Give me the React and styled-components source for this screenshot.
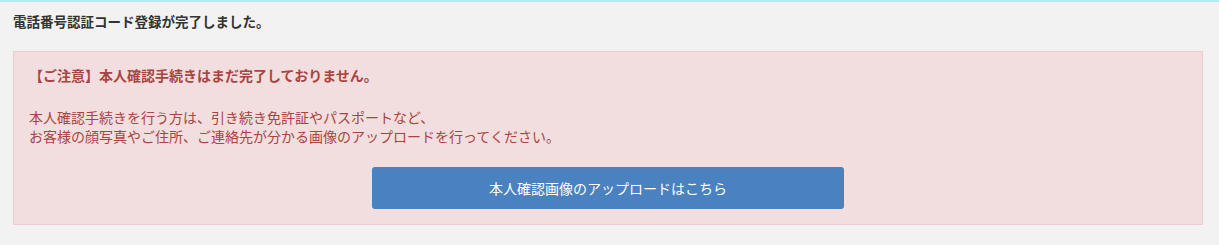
import React from "react";
import styled, { createGlobalStyle } from "styled-components";

const Global = createGlobalStyle`
  html, body { margin: 0; padding: 0; background: #f2f2f2; }
  body {
    font-family: "Noto Sans CJK JP", "Noto Sans", sans-serif;
    color: #333;
  }
`;

const Page = styled.div`
  border-top: 2px solid #b3ebf3;
  padding: 9px 13px 20px 13px;
  min-height: 245px;
  box-sizing: border-box;
`;

const Title = styled.h1`
  margin: 0 0 20px 0;
  font-size: 13.5px;
  line-height: 20px;
  font-weight: 700;
  color: #333;
`;

const Alert = styled.div`
  background: #f2dede;
  border: 1px solid #ebccd1;
  color: #a94442;
  padding: 13px 15px 15px 15px;
  width: 1190px;
  box-sizing: border-box;
`;

const Heading = styled.p`
  margin: 0 0 23px 0;
  font-size: 14px;
  line-height: 20px;
  font-weight: 700;
`;

const Body = styled.p`
  margin: 0 0 21px 0;
  font-size: 14px;
  line-height: 19px;
`;

const Actions = styled.div`
  display: flex;
  justify-content: center;
`;

const Button = styled.a`
  display: flex;
  align-items: center;
  justify-content: center;
  width: 472px;
  height: 42px;
  background: #4a81bf;
  color: #fff;
  border-radius: 3px;
  font-size: 14px;
  text-decoration: none;
  cursor: pointer;
`;

export default function App() {
  return (
    <>
      <Global />
      <Page>
        <Title>電話番号認証コード登録が完了しました。</Title>
        <Alert>
          <Heading>【ご注意】本人確認手続きはまだ完了しておりません。</Heading>
          <Body>
            本人確認手続きを行う方は、引き続き免許証やパスポートなど、
            <br />
            お客様の顔写真やご住所、ご連絡先が分かる画像のアップロードを行ってください。
          </Body>
          <Actions>
            <Button>本人確認画像のアップロードはこちら</Button>
          </Actions>
        </Alert>
      </Page>
    </>
  );
}
